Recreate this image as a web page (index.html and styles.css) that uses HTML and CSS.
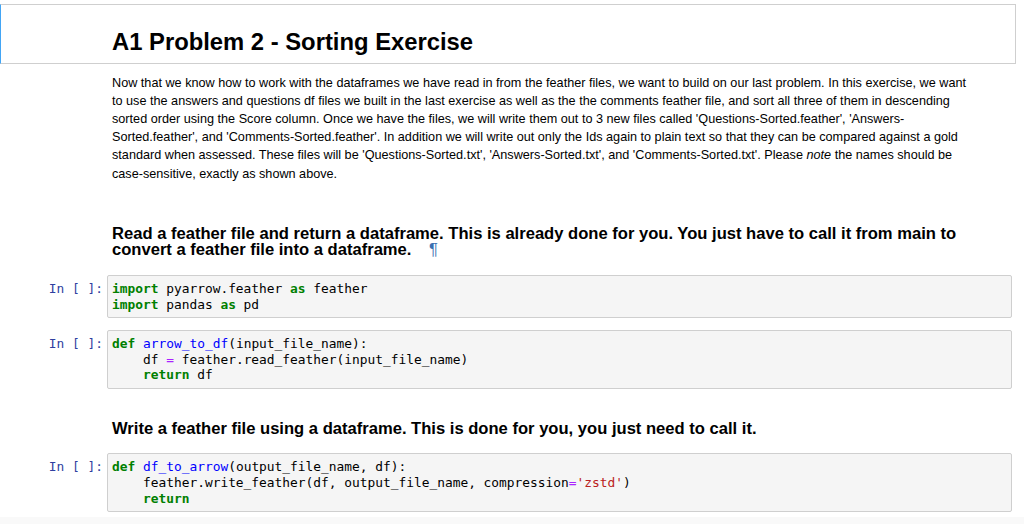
FILE: index.html
```html
<!DOCTYPE html>
<html>
<head>
<meta charset="utf-8">
<link rel="stylesheet" href="styles.css">
</head>
<body>
<div class="notebook">
  <div class="cell title-cell">
    <div class="prompt"></div>
    <div class="md">
      <h1 class="h1">A1 Problem 2 - Sorting Exercise</h1>
    </div>
  </div>

  <div class="cell para-cell">
    <div class="prompt"></div>
    <div class="md">
      <p class="para">Now that we know how to work with the dataframes we have read in from the feather files, we want to build on our last problem. In this exercise, we want<br>to use the answers and questions df files we built in the last exercise as well as the the comments feather file, and sort all three of them in descending<br>sorted order using the Score column. Once we have the files, we will write them out to 3 new files called 'Questions-Sorted.feather', 'Answers-<br>Sorted.feather', and 'Comments-Sorted.feather'. In addition we will write out only the Ids again to plain text so that they can be compared against a gold<br>standard when assessed. These files will be 'Questions-Sorted.txt', 'Answers-Sorted.txt', and 'Comments-Sorted.txt'. Please <em>note</em> the names should be<br>case-sensitive, exactly as shown above.</p>
    </div>
  </div>

  <div class="cell h3-cell first-h3">
    <div class="prompt"></div>
    <div class="md">
      <h3 class="h3">Read a feather file and return a dataframe. This is already done for you. You just have to call it from main to<br>convert a feather file into a dataframe. <span class="anchor">¶</span></h3>
    </div>
  </div>

  <div class="cell code-cell code-a">
    <div class="prompt in">In&nbsp;[&nbsp;]:</div>
    <div class="code"><pre><span class="kw">import</span> pyarrow.feather <span class="kw">as</span> feather
<span class="kw">import</span> pandas <span class="kw">as</span> pd</pre></div>
  </div>

  <div class="cell code-cell code-b">
    <div class="prompt in">In&nbsp;[&nbsp;]:</div>
    <div class="code"><pre><span class="kw">def</span> <span class="fn">arrow_to_df</span>(input_file_name):
    df <span class="op">=</span> feather.read_feather(input_file_name)
    <span class="kw">return</span> df</pre></div>
  </div>

  <div class="cell h3-cell second-h3">
    <div class="prompt"></div>
    <div class="md">
      <h3 class="h3">Write a feather file using a dataframe. This is done for you, you just need to call it.</h3>
    </div>
  </div>

  <div class="cell code-cell code-c">
    <div class="prompt in">In&nbsp;[&nbsp;]:</div>
    <div class="code"><pre><span class="kw">def</span> <span class="fn">df_to_arrow</span>(output_file_name, df):
    feather.write_feather(df, output_file_name, compression<span class="op">=</span><span class="str">'zstd'</span>)
    <span class="kw">return</span></pre></div>
  </div>
</div>
<div class="footer-strip"></div>
</body>
</html>
```

FILE: styles.css
```css
html, body {
  margin: 0;
  padding: 0;
  background: #ffffff;
  overflow: hidden;
  height: 524px;
}

body {
  font-family: "Liberation Sans", Arial, Helvetica, sans-serif;
  color: #000;
  font-size: 13px;
  display: flex;
  flex-direction: column;
}

.notebook {
  display: flex;
  flex-direction: column;
  height: 517px;
}

.cell {
  display: flex;
  flex-direction: row;
  padding-right: 12px;
}

.prompt {
  width: 103px;
  flex: none;
  text-align: right;
  font-family: "DejaVu Sans Mono", Menlo, monospace;
  font-size: 12.9px;
  line-height: 15.6px;
}

.prompt.in {
  color: #303F9F;
  padding-top: 6px;
}

.md {
  flex: 1;
  padding-left: 9px;
}

.title-cell {
  margin-top: 4px;
  margin-right: 8px;
  border: 1px solid #cfcfcf;
  border-left: 1px solid #42A5F5;
  padding-right: 0;
}

.title-cell .prompt {
  width: 102px;
}

.h1 {
  margin: 0;
  font-size: 23.8px;
  line-height: 24px;
  font-weight: bold;
  padding: 25px 0 9px 0;
}

.para-cell {
  margin-top: 9.6px;
}

.para {
  margin: 0;
  font-size: 12.66px;
  line-height: 18.2px;
  white-space: nowrap;
}

.h3 {
  margin: 0;
  font-size: 16.58px;
  line-height: 16.7px;
  font-weight: bold;
  white-space: nowrap;
}

.first-h3 {
  margin-top: 42.8px;
}

.second-h3 {
  margin-top: 31.7px;
}

.anchor {
  color: #3a6fb0;
  font-weight: normal;
  margin-left: 13px;
}

.code-cell {
  margin-top: 16px;
}

.code-b {
  margin-top: 12px;
}

.code {
  flex: 1;
  margin-left: 4px;
  background: #f5f5f5;
  border: 1px solid #cfcfcf;
  border-radius: 2px;
  padding: 5px 4px;
}

.code pre {
  margin: 0;
  font-family: "DejaVu Sans Mono", Menlo, monospace;
  font-size: 12.87px;
  line-height: 15.6px;
  color: #000;
}

.kw {
  color: #008000;
  font-weight: bold;
}

.fn {
  color: #0000ff;
}

.op {
  color: #aa22ff;
}

.str {
  color: #ba2121;
}

.footer-strip {
  flex: 1;
  background: #f9f9f9;
}
```
